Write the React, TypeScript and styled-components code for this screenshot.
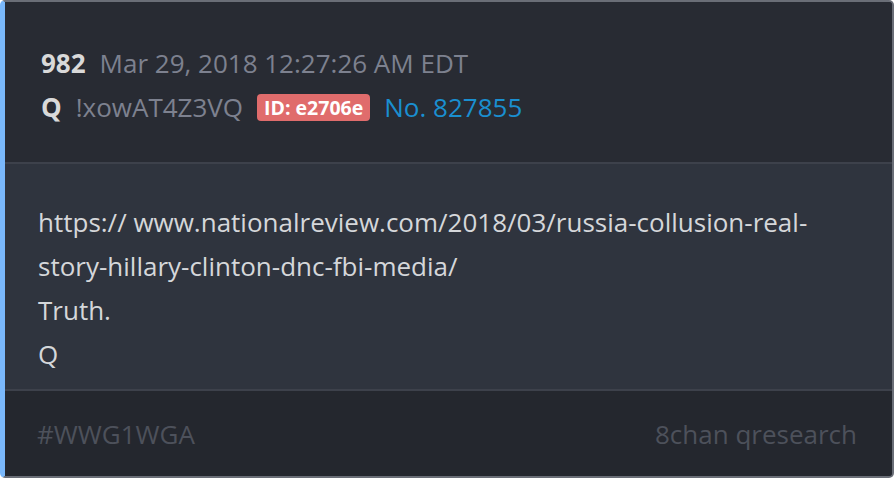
import React from "react";
import styled, { createGlobalStyle } from "styled-components";

const GlobalStyle = createGlobalStyle`
  html, body {
    margin: 0;
    padding: 0;
    background: #ffffff;
  }
  body {
    font-family: "Open Sans", "Noto Sans", sans-serif;
  }
`;

const Card = styled.article`
  box-sizing: border-box;
  width: 894px;
  height: 478px;
  display: flex;
  flex-direction: column;
  border: 2px solid #6a6e77;
  border-left: 5px solid #7ab8fb;
  border-radius: 5px;
  overflow: hidden;
  background: #2f343e;
`;

const Header = styled.header`
  height: 162px;
  flex-shrink: 0;
  box-sizing: border-box;
  padding: 39px 0 0 36px;
  background: #282b33;
  border-bottom: 2px solid #3d414b;
  display: flex;
  flex-direction: column;
`;

const Row = styled.div`
  display: flex;
  align-items: center;
  gap: 14px;
  font-size: 26px;
  line-height: 44px;
`;

const Strong = styled.span`
  font-weight: 700;
  color: #d9d9d9;
`;

const Muted = styled.span`
  color: #7d818f;
`;

const Badge = styled.span`
  background: #e06c6c;
  color: #ffffff;
  font-weight: 700;
  font-size: 19.5px;
  line-height: 27px;
  padding: 0 7px;
  border-radius: 4px;
`;

const PostLink = styled.span`
  color: #1a8fd0;
`;

const Body = styled.section`
  flex: 1;
  box-sizing: border-box;
  padding: 36px 32px 0 33px;
  color: #d5d7da;
  font-size: 26px;
  line-height: 44px;
  border-bottom: 2px solid #3d414b;
`;

const Footer = styled.footer`
  height: 85px;
  flex-shrink: 0;
  box-sizing: border-box;
  padding: 0 35px 0 32px;
  background: #24272e;
  display: flex;
  align-items: center;
  justify-content: space-between;
  color: #4d515b;
  font-size: 26px;
`;

export default function App() {
  return (
    <>
      <GlobalStyle />
      <Card>
        <Header>
          <Row>
            <Strong>982</Strong>
            <Muted>Mar 29, 2018 12:27:26 AM EDT</Muted>
          </Row>
          <Row>
            <Strong>Q</Strong>
            <Muted>!xowAT4Z3VQ</Muted>
            <Badge>ID: e2706e</Badge>
            <PostLink>No. 827855</PostLink>
          </Row>
        </Header>
        <Body>
          <div>https:// www.nationalreview.com/2018/03/russia-collusion-real-</div>
          <div>story-hillary-clinton-dnc-fbi-media/</div>
          <div>Truth.</div>
          <div>Q</div>
        </Body>
        <Footer>
          <span>#WWG1WGA</span>
          <span>8chan qresearch</span>
        </Footer>
      </Card>
    </>
  );
}
